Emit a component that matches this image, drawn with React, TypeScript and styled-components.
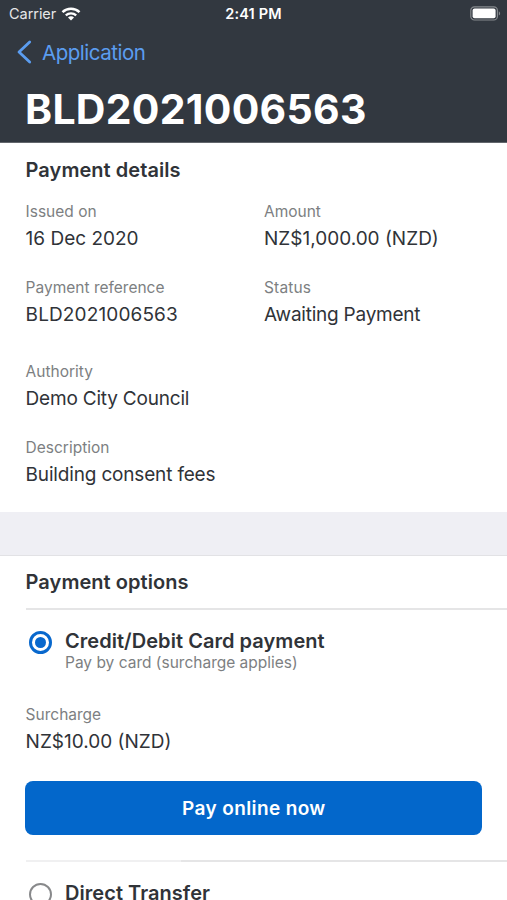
import React from "react";
import styled, { createGlobalStyle } from "styled-components";

const Global = createGlobalStyle`
  *{box-sizing:border-box}
  html,body{margin:0;padding:0;background:#fff;overflow:hidden}
  body{font-family:Inter,"Liberation Sans",sans-serif;color:#303338}
`;

const Screen = styled.div`
  width: 507px;
  height: 900px;
  overflow: hidden;
  background: #fff;
`;
const Header = styled.header`
  height: 143px;
  background: #323840;
  border-bottom: 1px solid #62666c;
  color: #fff;
`;
const StatusBar = styled.div`
  height: 28px;
  padding: 0 6px 0 9px;
  display: grid;
  grid-template-columns: 1fr auto 1fr;
  align-items: center;
  line-height: 18px;
  font-size: 14.5px;
`;
const Carrier = styled.div`
  display: flex;
  align-items: center;
  gap: 5px;
  color: #e6e7e8;
  letter-spacing: -0.05px;
`;
const Clock = styled.div`
  font-size: 14.5px;
  font-weight: 600;
  letter-spacing: 0.15px;
  padding-right: 3px;
`;
const BatterySlot = styled.div`
  display: flex;
  justify-content: flex-end;
  margin-top: -1px;
`;
const Back = styled.div`
  height: 48px;
  padding-left: 17px;
  display: flex;
  align-items: center;
  gap: 10px;
  color: #5b9df0;
  font-size: 20.5px;
  letter-spacing: -0.48px;
`;
const Title = styled.h1`
  margin: 5px 0 0 25px;
  font-size: 41px;
  line-height: 57px;
  font-weight: 700;
  letter-spacing: 0.27px;
  white-space: nowrap;
`;
const Details = styled.section`
  height: 369px;
  padding: 14px 25px 0 25.6px;
`;
const SectionTitle = styled.h2`
  margin: 0;
  font-size: 20px;
  line-height: 26px;
  font-weight: 600;
  letter-spacing: 0.05px;
  white-space: nowrap;
`;
const Grid = styled.div`
  display: grid;
  grid-template-columns: 238.4px 1fr;
  grid-template-rows: 76px 84px 76px 76px;
  margin-top: 18px;
`;
const Field = styled.div<{ $wide?: boolean }>`
  grid-column: ${p => (p.$wide ? "1 / -1" : "auto")};
`;
const Label = styled.div<{ $track?: number }>`
  font-size: 15.5px;
  line-height: 22px;
  color: #7d7f82;
  letter-spacing: ${p => p.$track ?? 0}px;
  white-space: nowrap;
`;
const Value = styled.div<{ $track?: number }>`
  font-size: 19px;
  line-height: 28px;
  margin-top: 2px;
  letter-spacing: ${p => p.$track ?? 0}px;
  white-space: nowrap;
`;
const Gap = styled.div`
  height: 44px;
  background: #efeff4;
  border-bottom: 1px solid #e2e2e5;
`;
const Options = styled.section`
  padding: 13px 0 0 25.6px;
`;
const Rule = styled.div`
  height: 2px;
  margin-top: 13px;
  background: #e5e5e6;
`;
const LowerRule = styled.div`
  height: 2px;
  margin-top: 25px;
  background: linear-gradient(90deg, #f0f0f1 155px, #e5e5e6 155px);
`;
const Option = styled.div`
  display: flex;
  align-items: flex-start;
  gap: 13.4px;
  padding: 18px 0 0 3px;
`;
const OptionText = styled.div`
  display: flex;
  flex-direction: column;
`;
const OptionHint = styled(Label)`
  line-height: 20px;
  margin-top: -1px;
`;
const Radio = styled.span<{ $checked?: boolean }>`
  width: 23px;
  height: 23px;
  margin-top: 3px;
  flex: none;
  display: grid;
  place-items: center;
  border-radius: 50%;
  border: ${p => (p.$checked ? "3px solid #0868cd" : "2px solid #88898b")};
  &::after {
    content: "";
    width: 11px;
    height: 11px;
    border-radius: 50%;
    background: ${p => (p.$checked ? "#0868cd" : "transparent")};
  }
`;
const Surcharge = styled.div`
  margin-top: 31px;
`;
const Button = styled.button`
  width: 457px;
  height: 54px;
  margin: 25px 0 0 -0.2px;
  padding: 0;
  border: 0;
  border-radius: 8px;
  background: #0367cb;
  color: #fff;
  font: 600 19px Inter, sans-serif;
  letter-spacing: 0.38px;
  display: block;
`;

const Wifi = () => (
  <svg width="20" height="14" viewBox="0 0 20 14" fill="none" stroke="#fff">
    <path d="M1.5 5.1a12.3 12.3 0 0 1 17 0" strokeWidth="2.5" />
    <path d="M4.8 8.4a7.6 7.6 0 0 1 10.4 0" strokeWidth="2.3" />
    <path d="M10 13.6 7 10.5a4.2 4.2 0 0 1 6 0Z" fill="#fff" stroke="none" />
  </svg>
);

const Battery = () => (
  <svg width="31" height="15" viewBox="0 0 31 15" fill="none">
    <rect x="0.8" y="0.8" width="26.6" height="13.2" rx="3.6" stroke="#85898d" strokeWidth="1.2" />
    <rect x="2.6" y="2.6" width="23" height="9.6" rx="2" fill="#fff" />
    <path d="M28.8 5.2c1.8.7 1.8 3.7 0 4.4Z" fill="#85898d" />
  </svg>
);

const Chevron = () => (
  <svg width="15" height="24" viewBox="0 0 15 24" fill="none" stroke="#5b9df0" strokeWidth="2.8">
    <path d="M12.7 2 2 12l10.7 10" strokeLinecap="round" strokeLinejoin="round" />
  </svg>
);

const fields = [
  { label: "Issued on", value: "16 Dec 2020", track: 0 },
  { label: "Amount", value: "NZ$1,000.00 (NZD)", track: 0 },
  { label: "Payment reference", value: "BLD2021006563", track: 0.13 },
  { label: "Status", value: "Awaiting Payment", track: -0.23, labelTrack: 0.15 },
  { label: "Authority", value: "Demo City Council", track: -0.2, wide: true },
  { label: "Description", value: "Building consent fees", track: -0.17, wide: true },
];

export default function App() {
  return (
    <>
      <Global />
      <Screen>
        <Header>
          <StatusBar>
            <Carrier>Carrier<Wifi /></Carrier>
            <Clock>2:41 PM</Clock>
            <BatterySlot><Battery /></BatterySlot>
          </StatusBar>
          <Back><Chevron />Application</Back>
          <Title>BLD2021006563</Title>
        </Header>
        <Details>
          <SectionTitle>Payment details</SectionTitle>
          <Grid>
            {fields.map(f => (
              <Field key={f.label} $wide={f.wide}>
                <Label $track={f.labelTrack}>{f.label}</Label>
                <Value $track={f.track}>{f.value}</Value>
              </Field>
            ))}
          </Grid>
        </Details>
        <Gap />
        <Options>
          <SectionTitle>Payment options</SectionTitle>
          <Rule />
          <Option>
            <Radio $checked />
            <OptionText>
              <SectionTitle>Credit/Debit Card payment</SectionTitle>
              <OptionHint>Pay by card (surcharge applies)</OptionHint>
            </OptionText>
          </Option>
          <Surcharge>
            <Label>Surcharge</Label>
            <Value>NZ$10.00 (NZD)</Value>
          </Surcharge>
          <Button>Pay online now</Button>
          <LowerRule />
          <Option>
            <Radio />
            <SectionTitle>Direct Transfer</SectionTitle>
          </Option>
        </Options>
      </Screen>
    </>
  );
}
